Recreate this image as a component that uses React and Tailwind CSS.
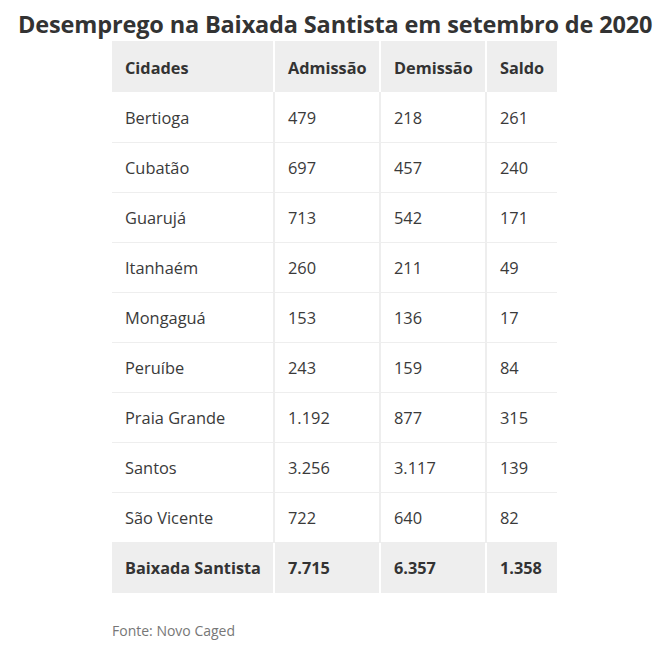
const linhas = [
  ["Bertioga", "479", "218", "261"],
  ["Cubatão", "697", "457", "240"],
  ["Guarujá", "713", "542", "171"],
  ["Itanhaém", "260", "211", "49"],
  ["Mongaguá", "153", "136", "17"],
  ["Peruíbe", "243", "159", "84"],
  ["Praia Grande", "1.192", "877", "315"],
  ["Santos", "3.256", "3.117", "139"],
  ["São Vicente", "722", "640", "82"],
];

const larguras = ["w-[162px]", "w-[106px]", "w-[106px]", "w-[71px]"];

export default function App() {
  return (
    <div
      className="w-[656px] h-[650px] bg-white text-[#333]"
      style={{ fontFamily: '"Open Sans", sans-serif' }}
    >
      <h1 className="pl-[18px] pt-[7px] text-[23.5px] font-bold leading-[34px] tracking-[-0.15px] whitespace-nowrap">
        Desemprego na Baixada Santista em setembro de 2020
      </h1>
      <table className="ml-[112px] border-collapse text-[16.3px]">
        <thead>
          <tr className="bg-[#eee] h-[51px]">
            {["Cidades", "Admissão", "Demissão", "Saldo"].map((h, i) => (
              <th
                key={h}
                className={`${larguras[i]} pl-[13px] pt-[3px] text-left font-bold ${
                  i < 3 ? "border-r-2 border-white" : ""
                }`}
              >
                {h}
              </th>
            ))}
          </tr>
        </thead>
        <tbody>
          {linhas.map((l) => (
            <tr key={l[0]} className="h-[50px] border-b border-[#eee]">
              {l.map((c, i) => (
                <td
                  key={i}
                  className={`pl-[13px] pt-[3px] text-[16.4px] text-[#3a3a3a] ${
                    i < 3 ? "border-r-2 border-[#eee]" : ""
                  }`}
                >
                  {c}
                </td>
              ))}
            </tr>
          ))}
          <tr className="bg-[#eee] h-[51px] font-bold">
            {["Baixada Santista", "7.715", "6.357", "1.358"].map((c, i) => (
              <td
                key={i}
                className={`pl-[13px] ${i < 3 ? "border-r-2 border-white" : ""}`}
              >
                {c}
              </td>
            ))}
          </tr>
        </tbody>
      </table>
      <p className="ml-[112px] mt-[27px] text-[14px] text-[#777]">Fonte: Novo Caged</p>
    </div>
  );
}
